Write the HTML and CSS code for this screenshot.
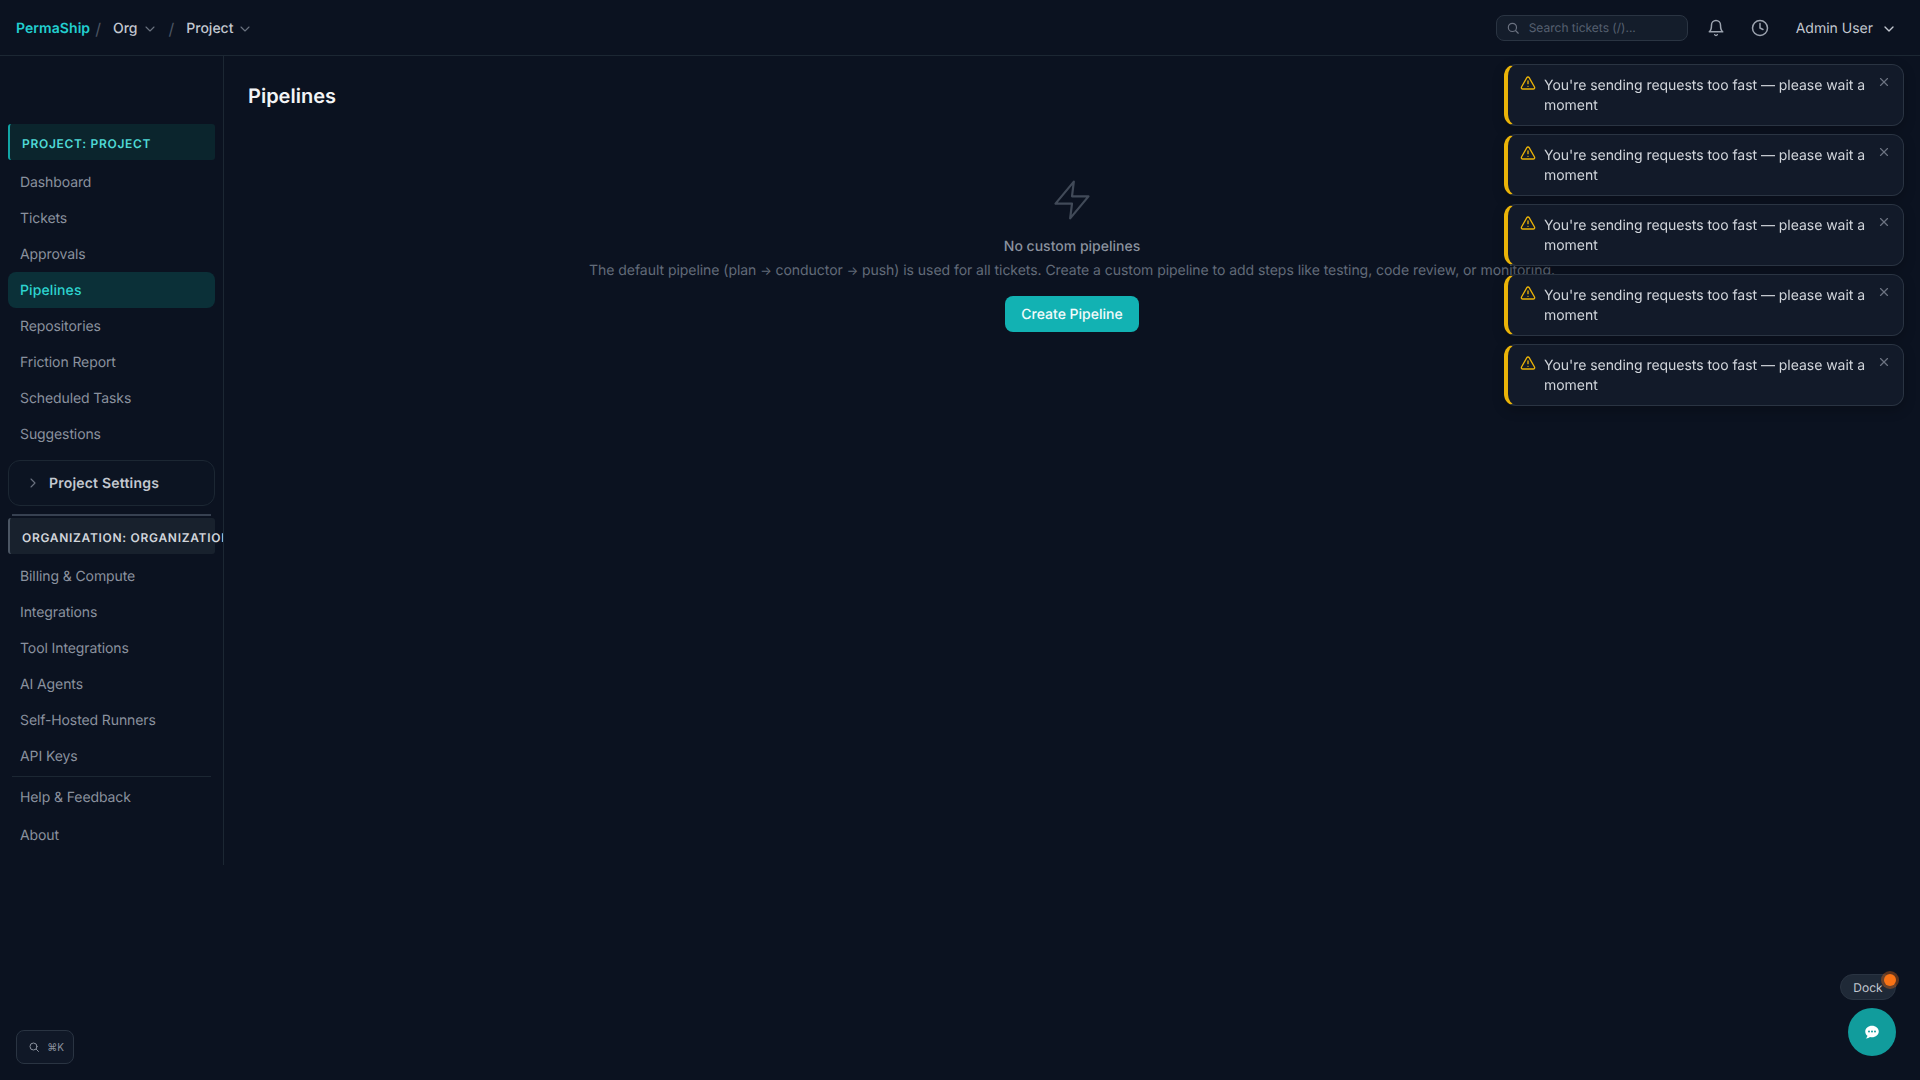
FILE: index.html
```html
<!DOCTYPE html>
<html lang="en">
<head>
<meta charset="utf-8">
<title>Pipelines</title>
<link rel="stylesheet" href="styles.css">
</head>
<body>
<header class="topbar">
  <div class="crumbs">
    <a class="brand">PermaShip</a>
    <span class="slash slash-a">/</span>
    <span class="crumb crumb-org">Org <svg class="chev" viewBox="0 0 24 24"><path d="m6 9 6 6 6-6"/></svg></span>
    <span class="slash slash-b">/</span>
    <span class="crumb">Project <svg class="chev" viewBox="0 0 24 24"><path d="m6 9 6 6 6-6"/></svg></span>
  </div>
  <div class="top-right">
    <div class="search">
      <svg class="search-icon" viewBox="0 0 24 24"><circle cx="11" cy="11" r="7"/><path d="m21 21-4.3-4.3"/></svg>
      <span>Search tickets (/)...</span>
    </div>
    <svg class="top-icon bell" viewBox="0 0 24 24"><path d="M6 8a6 6 0 0 1 12 0c0 7 3 9 3 9H3s3-2 3-9"/><path d="M10.300 21a1.940 1.940 0 0 0 3.400 0"/></svg>
    <svg class="top-icon clock" viewBox="0 0 24 24"><circle cx="12" cy="12" r="10"/><path d="M12 6v6l4 2"/></svg>
    <div class="user">Admin User <svg class="user-chev" viewBox="0 0 24 24"><path d="m6 9 6 6 6-6"/></svg></div>
  </div>
</header>

<div class="shell">
  <aside class="sidebar">
    <div class="section-head section-project">PROJECT: PROJECT</div>
    <nav class="nav">
      <a class="nav-item">Dashboard</a>
      <a class="nav-item">Tickets</a>
      <a class="nav-item">Approvals</a>
      <a class="nav-item active">Pipelines</a>
      <a class="nav-item">Repositories</a>
      <a class="nav-item">Friction Report</a>
      <a class="nav-item">Scheduled Tasks</a>
      <a class="nav-item">Suggestions</a>
    </nav>
    <div class="settings">
      <svg class="settings-chev" viewBox="0 0 24 24"><path d="m9 6 6 6-6 6"/></svg>
      <span>Project Settings</span>
    </div>
    <div class="rule rule-strong"></div>
    <div class="section-head section-org">ORGANIZATION: ORGANIZATION</div>
    <nav class="nav">
      <a class="nav-item">Billing &amp; Compute</a>
      <a class="nav-item">Integrations</a>
      <a class="nav-item">Tool Integrations</a>
      <a class="nav-item">AI Agents</a>
      <a class="nav-item">Self-Hosted Runners</a>
      <a class="nav-item">API Keys</a>
    </nav>
    <div class="rule rule-thin"></div>
    <nav class="nav nav-foot">
      <a class="nav-item">Help &amp; Feedback</a>
      <a class="nav-item">About</a>
    </nav>
  </aside>

  <main class="main">
    <h1 class="title">Pipelines</h1>
    <section class="empty">
      <svg class="empty-icon" viewBox="0 0 24 24"><path d="M13 2 3 14h9l-1 8 10-12h-9l1-8z"/></svg>
      <h2 class="empty-title">No custom pipelines</h2>
      <p class="empty-text">The default pipeline (plan <span class="arrow">→</span> conductor <span class="arrow">→</span> push) is used for all tickets. Create a custom pipeline to add steps like testing, code review, or monitoring.</p>
      <button class="create">Create Pipeline</button>
    </section>
  </main>
</div>

<div class="toasts">
  <div class="toast">
    <svg class="warn" viewBox="0 0 24 24"><path d="m21.730 18-8-14a2 2 0 0 0-3.480 0l-8 14A2 2 0 0 0 4 21h16a2 2 0 0 0 1.730-3Z"/><path d="M12 9v4"/><path d="M12 17h.01"/></svg>
    <p>You're sending requests too fast — please wait a moment</p>
    <svg class="close" viewBox="0 0 24 24"><path d="M18 6 6 18"/><path d="m6 6 12 12"/></svg>
  </div>
  <div class="toast">
    <svg class="warn" viewBox="0 0 24 24"><path d="m21.730 18-8-14a2 2 0 0 0-3.480 0l-8 14A2 2 0 0 0 4 21h16a2 2 0 0 0 1.730-3Z"/><path d="M12 9v4"/><path d="M12 17h.01"/></svg>
    <p>You're sending requests too fast — please wait a moment</p>
    <svg class="close" viewBox="0 0 24 24"><path d="M18 6 6 18"/><path d="m6 6 12 12"/></svg>
  </div>
  <div class="toast">
    <svg class="warn" viewBox="0 0 24 24"><path d="m21.730 18-8-14a2 2 0 0 0-3.480 0l-8 14A2 2 0 0 0 4 21h16a2 2 0 0 0 1.730-3Z"/><path d="M12 9v4"/><path d="M12 17h.01"/></svg>
    <p>You're sending requests too fast — please wait a moment</p>
    <svg class="close" viewBox="0 0 24 24"><path d="M18 6 6 18"/><path d="m6 6 12 12"/></svg>
  </div>
  <div class="toast">
    <svg class="warn" viewBox="0 0 24 24"><path d="m21.730 18-8-14a2 2 0 0 0-3.480 0l-8 14A2 2 0 0 0 4 21h16a2 2 0 0 0 1.730-3Z"/><path d="M12 9v4"/><path d="M12 17h.01"/></svg>
    <p>You're sending requests too fast — please wait a moment</p>
    <svg class="close" viewBox="0 0 24 24"><path d="M18 6 6 18"/><path d="m6 6 12 12"/></svg>
  </div>
  <div class="toast">
    <svg class="warn" viewBox="0 0 24 24"><path d="m21.730 18-8-14a2 2 0 0 0-3.480 0l-8 14A2 2 0 0 0 4 21h16a2 2 0 0 0 1.730-3Z"/><path d="M12 9v4"/><path d="M12 17h.01"/></svg>
    <p>You're sending requests too fast — please wait a moment</p>
    <svg class="close" viewBox="0 0 24 24"><path d="M18 6 6 18"/><path d="m6 6 12 12"/></svg>
  </div>
</div>

<button class="palette">
  <svg viewBox="0 0 24 24"><circle cx="11" cy="11" r="7"/><path d="m21 21-4.3-4.3"/></svg>
  <span>⌘K</span>
</button>

<div class="dock">Dock<span class="dot"></span></div>
<button class="chat">
  <svg viewBox="0 0 24 24"><path class="bubble" d="M12 3.500c-5 0-9 3.300-9 7.700 0 2.300 1.100 4.300 2.900 5.700-.2 1.500-1 2.700-2.300 3.600 2.300.1 4.300-.6 5.800-1.900.8.200 1.700.3 2.600.3 5 0 9-3.300 9-7.700S17 3.500 12 3.500z"/><circle class="pip" cx="8" cy="11.200" r="1.300"/><circle class="pip" cx="12" cy="11.200" r="1.300"/><circle class="pip" cx="16" cy="11.200" r="1.300"/></svg>
</button>
</body>
</html>
```

FILE: styles.css
```css
* { box-sizing: border-box; }
html, body { height: 100%; }
body {
  margin: 0;
  background: #0b1220;
  color: #d1d5db;
  font-family: Inter, "Liberation Sans", sans-serif;
  font-size: 14px;
  text-rendering: geometricPrecision;
  overflow: hidden;
}
svg { fill: none; stroke: currentColor; stroke-width: 2; stroke-linecap: round; stroke-linejoin: round; display: block; }

.topbar {
  height: 56px;
  border-bottom: 1px solid #1c2733;
  display: flex;
  align-items: center;
  justify-content: space-between;
  padding: 0 16px;
}
.crumbs { display: flex; align-items: center; padding-top: 2px; }
.brand { color: #22cfd0; font-weight: 600; font-size: 14px; letter-spacing: 0.06px; }
.slash { color: #4b5563; font-size: 16px; }
.slash-a { margin-left: 5px; margin-right: 12px; }
.slash-b { margin-left: 11px; margin-right: 12px; }
.crumb { display: flex; align-items: center; gap: 4px; color: #c3c8d0; font-size: 14px; font-weight: 500; }
.chev { width: 16px; height: 16px; color: #6b7280; stroke-width: 1.6; }

.top-right { display: flex; align-items: center; }
.search {
  width: 192px;
  height: 26px;
  background: #141d2b;
  border: 1px solid #2a3442;
  border-radius: 8px;
  display: flex;
  align-items: center;
  padding-left: 9px;
  gap: 9px;
  color: #566070;
  font-size: 12px;
}
.search-icon { width: 14px; height: 14px; color: #6b7280; }
.top-icon { width: 18px; height: 18px; color: #9ca3af; }
.bell { margin-left: 19px; }
.clock { margin-left: 26px; }
.user { margin-left: 27px; margin-right: 7px; padding-top: 2px; display: flex; align-items: center; gap: 8px; color: #c3c8d0; font-size: 14px; }
.user-chev { width: 16px; height: 16px; color: #c3c8d0; }

.shell { display: flex; align-items: flex-start; }
.sidebar {
  width: 224px;
  height: 809px;
  border-right: 1px solid #1c2733;
  padding: 68px 8px 0;
  flex: none;
  overflow: hidden;
}
.section-head {
  height: 36px;
  display: flex;
  align-items: center;
  padding: 2px 0 0 12px;
  border-left: 2px solid;
  border-radius: 3px;
  font-size: 12px;
  font-weight: 600;
  letter-spacing: 0.7px;
  white-space: nowrap;
}
.section-project { background: #0b252d; border-color: #12a5a6; color: #4fd9d6; }
.section-org { background: #18212d; border-color: #4b5563; color: #d1d5db; }
.nav { display: flex; flex-direction: column; margin-top: 4px; }
.nav-item {
  height: 36px;
  display: flex;
  align-items: center;
  padding-left: 12px;
  border-radius: 8px;
  color: #8a919e;
  font-size: 14px;
  letter-spacing: -0.1px;
}
.nav-item.active { background: #0b3038; color: #2dd4cf; font-weight: 500; letter-spacing: 0.1px; }

.settings {
  height: 46px;
  margin-top: 8px;
  border: 1px solid #1c2733;
  border-radius: 12px;
  display: flex;
  align-items: center;
  padding-left: 17px;
  gap: 9px;
  background: #0c1422;
  color: #c3c8d0;
  font-weight: 600;
  font-size: 14px;
  letter-spacing: 0.2px;
}
.settings-chev { width: 16px; height: 16px; color: #6b7280; stroke-width: 1.6; margin-left: -1px; margin-right: -1px; }
.rule { margin: 0 4px; }
.rule-strong { height: 2px; background: #374151; margin-top: 8px; margin-bottom: 2px; }
.rule-thin { height: 1px; background: #1c2733; margin-top: 2px; }
.nav-foot { margin-top: 2px; gap: 2px; }

.main { flex: 1; padding: 24px; min-width: 0; }
.title { margin: 0; font-size: 20px; line-height: 32px; font-weight: 600; color: #f3f4f6; }
.empty { display: flex; flex-direction: column; align-items: center; margin-top: 66px; }
.empty-icon { width: 44px; height: 44px; color: #414a58; stroke-width: 1.2; }
.empty-title { margin: 15px 0 0; font-size: 14px; line-height: 20px; font-weight: 500; color: #8a919e; }
.empty-text { margin: 4px 0 0; font-size: 14px; line-height: 20px; color: #626b79; white-space: nowrap; letter-spacing: -0.045px; }
.arrow { font-size: 12px; }
.create {
  margin-top: 15px;
  height: 36px;
  width: 134px;
  border: 0;
  border-radius: 8px;
  background: #12b2b3;
  color: #f2fbfb;
  font: 500 14px Inter, "Liberation Sans", sans-serif;
  text-rendering: geometricPrecision;
}

.toasts { position: fixed; top: 64px; left: 1504px; width: 400px; display: flex; flex-direction: column; gap: 8px; }
.toast {
  height: 62px;
  background: #121a29;
  border: 1px solid #2a3442;
  border-left: 4px solid #eab308;
  border-radius: 12px;
  display: flex;
  align-items: flex-start;
  padding: 11px 10px 0 12px;
  box-shadow: 0 4px 12px rgba(0, 0, 0, 0.25);
}
.toast p { margin: 0 0 0 8px; width: 326px; font-size: 14px; line-height: 20px; color: #d1d5db; letter-spacing: -0.04px; }
.warn { width: 16px; height: 16px; color: #eab308; flex: none; margin-top: -1px; }
.close { width: 14px; height: 14px; color: #6b7280; flex: none; margin-left: 7px; margin-top: -1px; }

.palette {
  position: fixed;
  left: 16px;
  top: 1030px;
  width: 58px;
  height: 34px;
  background: #101827;
  border: 1px solid #2a3442;
  border-radius: 8px;
  display: flex;
  align-items: center;
  justify-content: center;
  gap: 7px;
  color: #8a919e;
  padding: 0;
  font: 10px Inter, "Liberation Sans", sans-serif;
}
.palette svg { width: 12px; height: 12px; margin-left: 2px; }

.dock {
  position: fixed;
  left: 1840px;
  top: 974px;
  width: 56px;
  height: 26px;
  background: #1f2937;
  border: 1px solid #2a3442;
  border-radius: 13px;
  display: flex;
  align-items: center;
  justify-content: center;
  color: #c3c8d0;
  font-size: 12px;
}
.dot {
  position: absolute;
  right: -1px;
  top: -1px;
  width: 12px;
  height: 12px;
  border-radius: 50%;
  background: #f97316;
  box-shadow: 0 0 0 3px rgba(249, 115, 22, 0.35);
}
.chat {
  position: fixed;
  left: 1848px;
  top: 1008px;
  width: 48px;
  height: 48px;
  border: 0;
  border-radius: 50%;
  background: #119c9c;
  display: flex;
  align-items: center;
  justify-content: center;
  padding: 0;
}
.chat svg { width: 18px; height: 18px; }
.bubble { fill: #fff; stroke: none; }
.pip { fill: #119c9c; stroke: none; }
```
